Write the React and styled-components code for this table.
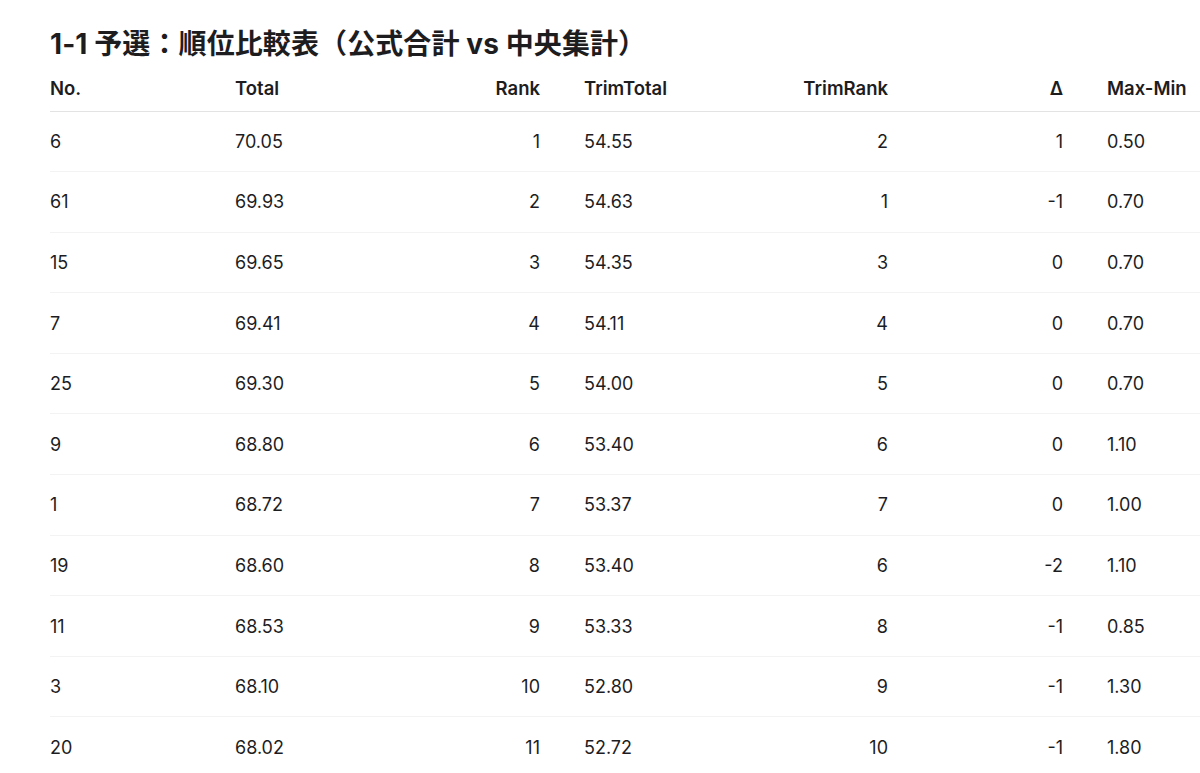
import React from "react";
import styled, { createGlobalStyle } from "styled-components";

const GlobalStyle = createGlobalStyle`
  html, body {
    margin: 0;
    padding: 0;
    background: #ffffff;
    overflow: hidden;
  }
  body {
    font-family: Inter, "Noto Sans CJK JP", "Noto Sans", sans-serif;
    color: #1d1d1f;
  }
`;

const Page = styled.div`
  padding: 27px 0 0 50px;
  width: 1200px;
  box-sizing: border-box;
`;

const Title = styled.h1`
  margin: 0 0 4px;
  font-size: 28px;
  line-height: 34px;
  font-weight: 700;
  letter-spacing: 0.1px;
`;

const Table = styled.table`
  border-collapse: collapse;
  table-layout: fixed;
  width: 1159px;
  font-size: 18px;
`;

const Head = styled.th`
  height: 46px;
  padding: 0 22px;
  box-sizing: border-box;
  font-size: 18.5px;
  font-weight: 600;
  text-align: ${(p) => (p.$right ? "right" : "left")};
  border-bottom: 1px solid #e3e3e3;
  &:first-child {
    padding-left: 0;
  }
`;

const Cell = styled.td`
  height: 60.6px;
  padding: 0 22px;
  box-sizing: border-box;
  font-weight: 400;
  text-align: ${(p) => (p.$right ? "right" : "left")};
  border-bottom: 1px solid #f3f3f3;
  &:first-child {
    padding-left: 0;
  }
`;

const columns = [
  { key: "no", label: "No.", width: 163 },
  { key: "total", label: "Total", width: 217 },
  { key: "rank", label: "Rank", width: 132, right: true },
  { key: "trimTotal", label: "TrimTotal", width: 168 },
  { key: "trimRank", label: "TrimRank", width: 180, right: true },
  { key: "delta", label: "Δ", width: 175, right: true },
  { key: "spread", label: "Max-Min", width: 124 },
];

const rows = [
  ["6", "70.05", "1", "54.55", "2", "1", "0.50"],
  ["61", "69.93", "2", "54.63", "1", "-1", "0.70"],
  ["15", "69.65", "3", "54.35", "3", "0", "0.70"],
  ["7", "69.41", "4", "54.11", "4", "0", "0.70"],
  ["25", "69.30", "5", "54.00", "5", "0", "0.70"],
  ["9", "68.80", "6", "53.40", "6", "0", "1.10"],
  ["1", "68.72", "7", "53.37", "7", "0", "1.00"],
  ["19", "68.60", "8", "53.40", "6", "-2", "1.10"],
  ["11", "68.53", "9", "53.33", "8", "-1", "0.85"],
  ["3", "68.10", "10", "52.80", "9", "-1", "1.30"],
  ["20", "68.02", "11", "52.72", "10", "-1", "1.80"],
];

const App = () => {
  return (
    <Page>
      <GlobalStyle />
      <Title>1-1 予選：順位比較表（公式合計 vs 中央集計）</Title>
      <Table>
        <colgroup>
          {columns.map((c) => (
            <col key={c.key} style={{ width: c.width }} />
          ))}
        </colgroup>
        <thead>
          <tr>
            {columns.map((c) => (
              <Head key={c.key} $right={c.right}>
                {c.label}
              </Head>
            ))}
          </tr>
        </thead>
        <tbody>
          {rows.map((r, i) => (
            <tr key={i}>
              {r.map((v, j) => (
                <Cell key={j} $right={columns[j].right}>
                  {v}
                </Cell>
              ))}
            </tr>
          ))}
        </tbody>
      </Table>
    </Page>
  );
};

export default App;
